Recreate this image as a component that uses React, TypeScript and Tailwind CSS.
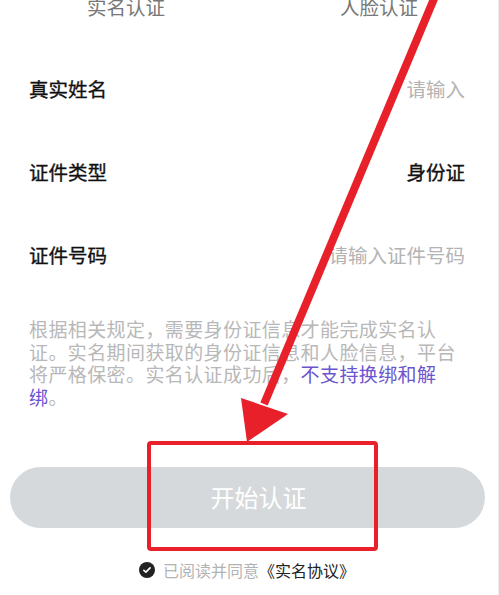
export default function App() {
  const rows = [
    { label: "真实姓名", value: "请输入", placeholder: true },
    { label: "证件类型", value: "身份证", placeholder: false },
    { label: "证件号码", value: "请输入证件号码", placeholder: true },
  ];

  return (
    <div
      className="relative h-[595px] w-[499px] overflow-hidden border-r border-[#ececec] bg-white"
      style={{ fontFamily: '"Noto Sans CJK SC", "Noto Sans", sans-serif' }}
    >
      {/* tabs, cut off at the top */}
      <div className="-mt-[3px] flex justify-between pl-[87px] pr-[80px] text-[19.5px] leading-[19px] text-[#777]">
        <span>实名认证</span>
        <span>人脸认证</span>
      </div>

      {/* form rows */}
      <div className="mt-[31px] pl-[29px] pr-[33px]">
        {rows.map((row) => (
          <div key={row.label} className="flex h-[83px] items-center justify-between text-[19.5px]">
            <span className="text-[#111] [-webkit-text-stroke:0.35px_#111]">{row.label}</span>
            <span
              className={
                row.placeholder ? "text-[#b3b3b3]" : "text-[#111] [-webkit-text-stroke:0.35px_#111]"
              }
            >
              {row.value}
            </span>
          </div>
        ))}
      </div>

      <p className="mt-[22px] pl-[29px] pr-[33px] text-[19px] leading-[22.7px] tracking-[0.4px] text-[#b8b8b8]">
        根据相关规定，需要身份证信息才能完成实名认证。实名期间获取的身份证信息和人脸信息，平台将严格保密。实名认证成功后，
        <span className="text-[#6b54cf]">不支持换绑和解绑</span>。
      </p>

      <div className="ml-[10px] mr-[13px] mt-[58px] flex h-[61px] items-center justify-center rounded-full bg-[#d6d9db] pl-[22px] text-[24px] text-white">
        开始认证
      </div>

      <div className="mt-[34px] flex items-center justify-center gap-[8px] pr-[4px] text-[16px] leading-[16px]">
        <span className="flex h-[16px] w-[16px] items-center justify-center rounded-full bg-[#222]">
          <svg viewBox="0 0 16 16" className="h-[10px] w-[10px]" fill="none" stroke="white" strokeWidth="2.6" strokeLinecap="round" strokeLinejoin="round">
            <path d="M3 8.5l3.2 3L13 4.5" />
          </svg>
        </span>
        <span>
          <span className="text-[#b3b3b3]">已阅读并同意</span>
          <span className="text-[#222]">《实名协议》</span>
        </span>
      </div>

      {/* red annotation */}
      <svg className="pointer-events-none absolute inset-0" width="499" height="595" viewBox="0 0 499 595">
        <line x1="436" y1="-6" x2="264" y2="404" stroke="#e8202a" strokeWidth="8" />
        <polygon points="247,442 241,398 288,414" fill="#e8202a" />
        <rect x="149" y="443" width="227" height="106" rx="2" fill="none" stroke="#e8202a" strokeWidth="4" />
      </svg>
    </div>
  );
}
